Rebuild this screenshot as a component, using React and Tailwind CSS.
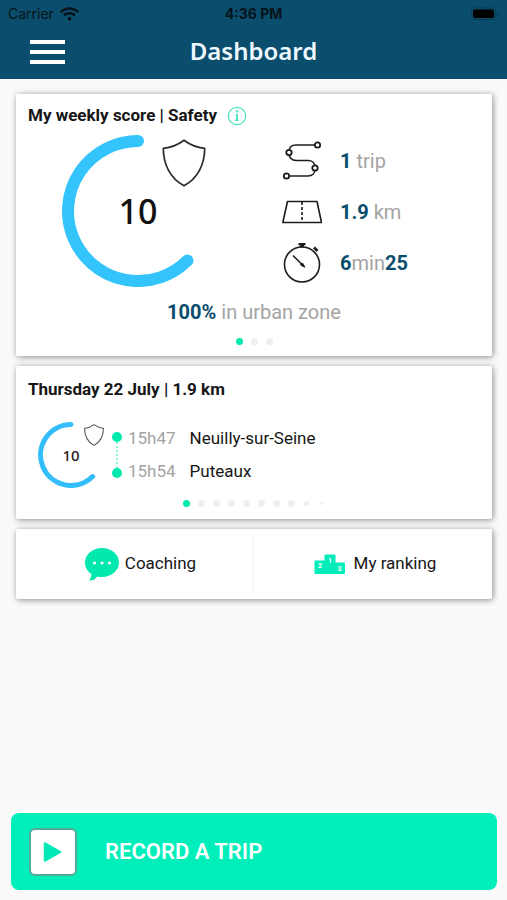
import { FaWifi } from "react-icons/fa";

const stats = [
  { icon: RouteIcon, parts: [["1", true], [" trip", false]] },
  { icon: RoadIcon, parts: [["1.9", true], [" km", false]] },
  { icon: StopwatchIcon, parts: [["6", true], ["min", false], ["25", true]] },
];

const stops = [
  { time: "15h47", place: "Neuilly-sur-Seine" },
  { time: "15h54", place: "Puteaux" },
];

function RouteIcon() {
  return (
    <svg viewBox="0 0 40 40" className="h-10 w-10" fill="none" stroke="#1c1c1c" strokeWidth="1.6">
      <path d="M32.500 4H14c-4 0-7 2.400-7 6.500v2c0 4.100 3 7 7 7h12c4 0 7 2.500 7 6.500v2.500c0 4-3 6.500-7 6.500H7" />
      <g fill="#fff" strokeWidth="1.8">
        <circle cx="35.500" cy="4" r="2.700" />
        <circle cx="7" cy="11.500" r="2.700" />
        <circle cx="33" cy="27" r="2.700" />
        <circle cx="4.500" cy="35" r="2.700" />
      </g>
    </svg>
  );
}

function RoadIcon() {
  return (
    <svg viewBox="0 0 40 24" className="h-6 w-10" fill="none" stroke="#1c1c1c" strokeWidth="1.6">
      <path d="M5.500 1.500h29.500l4.500 21H.8z" strokeLinejoin="round" />
      <path d="M20 2v20" strokeDasharray="3 2" />
    </svg>
  );
}

function StopwatchIcon() {
  return (
    <svg viewBox="0 0 40 40" className="h-10 w-10" fill="none" stroke="#1c1c1c" strokeWidth="1.6">
      <circle cx="20" cy="21.500" r="17.500" />
      <path d="M16.500 1h7M18 3h4" strokeWidth="2.400" />
      <path d="M32 4.500l3.500 3.500" strokeWidth="2.600" />
      <path d="M11 12.500l11 11" />
      <path d="M22.800 24.200l-4.300-2.200 2-2z" fill="#1c1c1c" strokeWidth="1" />
    </svg>
  );
}

function ShieldIcon({ className, color, strokeWidth }) {
  return (
    <svg viewBox="0 0 44 48" className={className} fill="none" stroke={color} strokeWidth={strokeWidth} strokeLinejoin="round">
      <path d="M22 1.200C17 5 9 8.500 1.300 9.300 1.300 25 8 39.500 22 46.800 36 39.500 42.700 25 42.700 9.300 35 8.500 27 5 22 1.200z" />
    </svg>
  );
}

function WeeklyGauge() {
  return (
    <div className="relative h-[152px] w-[152px]">
      <svg viewBox="0 0 152 152" className="h-full w-full" fill="none">
        <path d="M76 6A70 70 0 1 0 125.500 125.500" stroke="#33c4fb" strokeWidth="12" strokeLinecap="round" />
      </svg>
      <span className="absolute inset-0 flex items-center justify-center font-['Noto_Sans',sans-serif] text-[34px] font-medium text-[#111]">
        10
      </span>
      <ShieldIcon className="absolute right-2 top-1 h-12 w-11" color="#2a2a2a" strokeWidth="1.7" />
    </div>
  );
}

function TripGauge() {
  return (
    <div className="relative h-[66px] w-[66px]">
      <svg viewBox="0 0 66 66" className="h-full w-full" fill="none">
        <path d="M33 2.500A30.500 30.500 0 1 0 54.600 54.600" stroke="#33bdfb" strokeWidth="5" strokeLinecap="round" />
      </svg>
      <span className="absolute inset-0 flex items-center justify-center font-['Noto_Sans',sans-serif] text-[15px] font-medium text-[#222]">
        10
      </span>
      <ShieldIcon className="absolute right-0 top-0.5 h-[22px] w-5" color="#555" strokeWidth="2.400" />
    </div>
  );
}

function Dots({ count, fade }) {
  return (
    <div className="flex h-[7px] items-center justify-center gap-2">
      {Array.from({ length: count }, (_, i) => (
        <span key={i} className="flex size-[7px] items-center justify-center">
          <span
            className={`rounded-full ${i === 0 ? "bg-[#00e8ad]" : "bg-[#efefef]"} ${
              fade && i === count - 1 ? "size-[3px]" : fade && i === count - 2 ? "size-[5px]" : "size-[7px]"
            }`}
          />
        </span>
      ))}
    </div>
  );
}

function Card({ className, children }) {
  return (
    <section className={`rounded-xs bg-white shadow-[1px_1px_6px_rgba(0,0,0,0.45)] ${className}`}>
      {children}
    </section>
  );
}

function Header() {
  return (
    <header className="bg-[#0b4d6c]">
      <div className="grid h-7 grid-cols-3 items-center px-2 font-[Inter,sans-serif] text-sm text-[#06131b]">
        <div className="flex items-center gap-1.5">
          <span>Carrier</span>
          <FaWifi className="h-4 w-[19px]" />
        </div>
        <span className="text-center font-bold">4:36 PM</span>
        {/* Battery */}
        <svg viewBox="0 0 30 14" className="h-3.5 w-[30px] justify-self-end">
          <rect x="2.500" y="1" width="24" height="11.500" rx="3.500" fill="none" stroke="#093a52" />
          <rect x="4" y="2.500" width="21" height="8.500" rx="2" fill="#000" />
          <path d="M28 4.500c2 .6 2 3.900 0 4.500z" fill="#093a52" />
        </svg>
      </div>
      <div className="grid h-[51px] grid-cols-[1fr_auto_1fr] items-start px-7">
        <button type="button" aria-label="Menu" className="flex w-[39px] flex-col gap-1.5 px-0.5 pt-3">
          <span className="h-1 w-full bg-white" />
          <span className="h-1 w-full bg-white" />
          <span className="h-1 w-full bg-white" />
        </button>
        <h1 className="pt-[7px] font-['Noto_Sans',sans-serif] text-2xl font-semibold text-[#eef8ff]">Dashboard</h1>
      </div>
    </header>
  );
}

function WeeklyScore() {
  return (
    <Card className="px-3 pb-[11px] pt-3">
      <div className="flex h-5 items-center gap-2.5">
        <h2 className="text-[17px] font-bold">My weekly score | Safety</h2>
        <button type="button" aria-label="Score details">
          <svg viewBox="0 0 20 20" className="size-5" fill="none" stroke="#4fe6c4">
            <circle cx="10" cy="10" r="8.700" strokeWidth="1.200" />
            <circle cx="10" cy="5.500" r="1.200" fill="#4fe6c4" stroke="none" />
            <path d="M10 8.200v6.200" strokeWidth="2" />
            <path d="M8.300 8.700h1.700M8 14.400h4" strokeWidth="1" />
          </svg>
        </button>
      </div>
      <div className="grid grid-cols-2 pt-[9px]">
        <div className="flex justify-center pr-1.5">
          <WeeklyGauge />
        </div>
        <ul className="flex flex-col pl-7">
          {stats.map(({ icon: Icon, parts }, i) => (
            <li key={i} className="flex h-[51px] items-center gap-[18px] text-xl">
              <Icon />
              <span className="whitespace-pre">
                {parts.map(([text, strong]) => (
                  <span key={text} className={strong ? "font-bold text-[#0b4d6c]" : "text-[#a3a3a3]"}>
                    {text}
                  </span>
                ))}
              </span>
            </li>
          ))}
        </ul>
      </div>
      <p className="pb-3 pt-2.5 text-center text-xl text-[#a3a3a3]">
        <b className="text-[#0b4d6c]">100%</b> in urban zone
      </p>
      <Dots count={3} />
    </Card>
  );
}

function LastTrip() {
  return (
    <Card className="px-3 pb-3 pt-3">
      <h2 className="text-[17px] font-bold leading-[22px]">Thursday 22 July | 1.9 km</h2>
      <div className="flex pb-3 pl-2.5 pt-[22px]">
        <TripGauge />
        <div className="flex flex-col items-center pb-2.5 pl-2 pt-2.5">
          <span className="size-2.5 rounded-full bg-[#00e8ad]" />
          <span className="flex-1 border-l-2 border-dotted border-[#8ff3da]" />
          <span className="size-2.5 rounded-full bg-[#00e8ad]" />
        </div>
        <ul className="flex flex-col justify-end pl-1.5 text-[17px] leading-[33px]">
          {stops.map((stop) => (
            <li key={stop.time} className="flex gap-3.5">
              <span className="text-[#a3a3a3]">{stop.time}</span>
              <span>{stop.place}</span>
            </li>
          ))}
        </ul>
      </div>
      <Dots count={10} fade />
    </Card>
  );
}

function Shortcuts() {
  return (
    <Card className="grid h-[70px] grid-cols-2 py-1 text-[17px]">
      <button type="button" className="flex items-center justify-center gap-1.5 border-r border-[#f3f3f3] pl-11 pr-8">
        <svg viewBox="0 0 34 34" className="size-[34px]">
          <path
            d="M17 1C7.500 1 0 7.500 0 15.500c0 5 2.500 9 6.500 11.500-.3 2.500-1 4.500-2.300 6.500 4 .2 6.500-1.500 8-4 1.600.4 3.200.5 4.800.5 9.500 0 17-6.500 17-14.500S26.500 1 17 1z"
            fill="#00e8ad"
          />
          <g fill="#fff">
            <circle cx="9.500" cy="16" r="1.600" />
            <circle cx="17" cy="16" r="1.600" />
            <circle cx="24.500" cy="16" r="1.600" />
          </g>
        </svg>
        Coaching
      </button>
      <button type="button" className="flex items-center justify-center gap-2 pl-1">
        <svg viewBox="0 0 32 20" className="h-5 w-8">
          <path
            d="M1 6.500h9.500V1.500q0-1 1-1h9q1 0 1 1V8.500H30q1 0 1 1V19q0 1-1 1H1.500q-1 0-1-1V7.500q0-1 .5-1z"
            fill="#00edba"
          />
          <g fill="#fff" fontFamily="Roboto, sans-serif" fontSize="7" fontWeight="700" textAnchor="middle">
            <text x="6" y="14">2</text>
            <text x="16" y="8.500">1</text>
            <text x="25.500" y="16.500">3</text>
          </g>
        </svg>
        My ranking
      </button>
    </Card>
  );
}

export default function App() {
  return (
    <div className="flex min-h-screen flex-col bg-[#fafafa] font-[Roboto,sans-serif] text-[#161616]">
      <Header />
      <main className="flex flex-1 flex-col gap-2.5 pl-4 pr-[15px] pt-[15px]">
        <WeeklyScore />
        <LastTrip />
        <Shortcuts />
      </main>
      <footer className="pb-2.5 pl-[11px] pr-2.5 pt-6">
        <button
          type="button"
          className="flex h-[77px] w-full items-center gap-7 rounded-lg bg-[#00efba] px-[18px] text-[22px] font-semibold text-white"
        >
          <span className="flex size-12 items-center justify-center rounded-md border-2 border-[#55a898] bg-white">
            <svg viewBox="0 0 20 22" className="h-[22px] w-5">
              <path d="M2 2.500v17L17 11z" fill="#00e8b5" stroke="#00e8b5" strokeWidth="2.500" strokeLinejoin="round" />
            </svg>
          </span>
          RECORD A TRIP
        </button>
      </footer>
    </div>
  );
}
